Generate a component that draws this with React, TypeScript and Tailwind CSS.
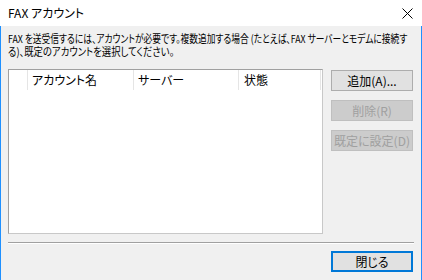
import React from 'react';

const FONT = "font-['Noto_Sans_CJK_JP','Noto_Sans',sans-serif] [font-feature-settings:'palt']";

export default function App() {
  return (
    <div className={`w-[422px] h-[280px] bg-[#f0f0f0] text-[12px] text-black flex flex-col overflow-hidden ${FONT}`}>
      {/* Title bar */}
      <div className="h-[26px] bg-white flex items-center justify-between pl-[8px] pr-[9px] shrink-0">
        <span className="leading-none">FAX アカウント</span>
        <svg width="11" height="11" viewBox="0 0 11 11" className="text-black">
          <path d="M0.5 0.5 L10.5 10.5 M10.5 0.5 L0.5 10.5" stroke="currentColor" strokeWidth="1" />
        </svg>
      </div>

      {/* Body */}
      <div className="flex-1 border-l border-r border-[#1e90ff] flex flex-col px-[7px]">
        <div className="mt-[6px] leading-[13px] whitespace-nowrap text-[11px]">
          <p className="scale-x-[0.795] origin-left">
            FAX を送受信するには、アカウントが必要です。複数追加する場合 (たとえば、FAX サーバーとモデムに接続す
          </p>
          <p className="scale-x-[0.85] origin-left">る)、既定のアカウントを選択してください。</p>
        </div>

        <div className="flex mt-[11px] gap-[8px]">
          {/* List view */}
          <div className="w-[315px] h-[165px] bg-white border border-[#a0a0a0] border-b-[#c8c8c8] border-r-[#c8c8c8] shrink-0">
            <div className="flex h-[20px] items-center">
              <div className="w-[19px] h-full border-r border-[#e5e5e5]" />
              <div className="w-[106px] h-full border-r border-[#e5e5e5] flex items-center pl-[4px] relative">
                アカウント名
                <svg width="4" height="5" viewBox="0 0 4 5" className="absolute left-[62px] top-[8px]">
                  <path d="M0.5 4.5 L3.5 0.5" stroke="#8a8a8a" strokeWidth="1" />
                </svg>
              </div>
              <div className="w-[105px] h-full border-r border-[#e5e5e5] flex items-center pl-[4px]">サーバー</div>
              <div className="w-[82px] h-full border-r border-[#e5e5e5] flex items-center pl-[5px]">状態</div>
            </div>
          </div>

          {/* Buttons */}
          <div className="flex flex-col gap-[9px] pt-[1px]">
            <button className="w-[82px] h-[21px] bg-[#e1e1e1] border border-[#adadad] flex items-center justify-center leading-none">
              追加(A)...
            </button>
            <button className="w-[82px] h-[21px] bg-[#cccccc] border border-[#bfbfbf] text-[#a0a0a0] flex items-center justify-center leading-none">
              削除(R)
            </button>
            <button className="w-[82px] h-[21px] bg-[#cccccc] border border-[#bfbfbf] text-[#a0a0a0] flex items-center justify-center leading-none">
              既定に設定(D)
            </button>
          </div>
        </div>

        <div className="mt-[8px] w-[406px] h-[2px] border-t border-[#a0a0a0] border-b border-b-white" />

        <div className="flex justify-end mt-[7px] pr-[1px]">
          <button className="w-[82px] h-[21px] bg-[#e1e1e1] border-2 border-[#0078d7] flex items-center justify-center leading-none">
            閉じる
          </button>
        </div>
      </div>
    </div>
  );
}
